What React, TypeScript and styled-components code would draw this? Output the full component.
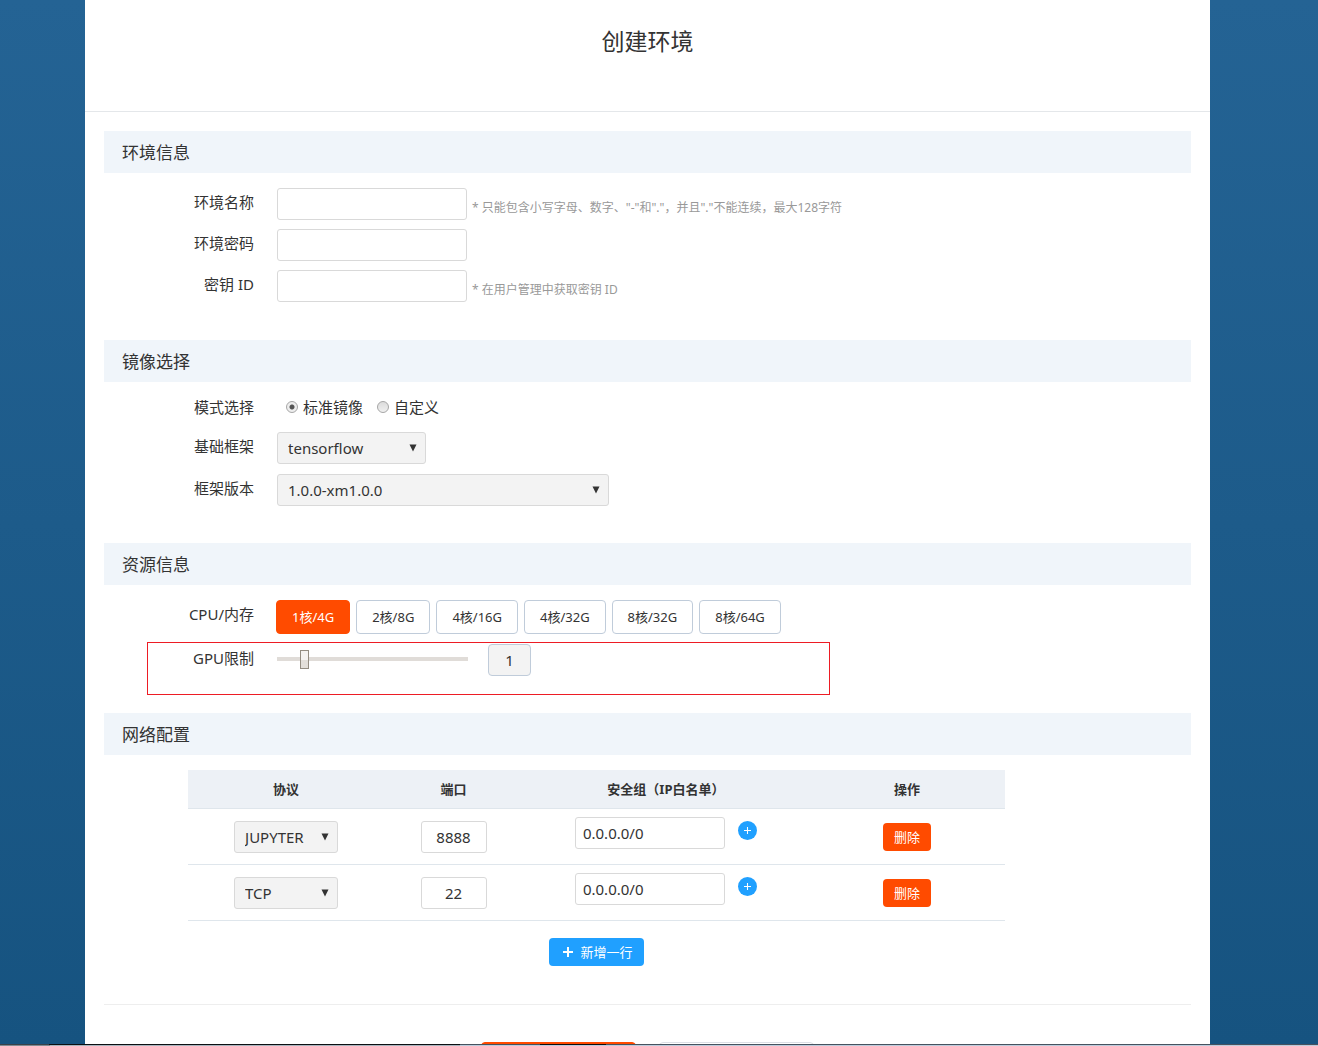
import React, { useId, useState } from "react";
import styled, { createGlobalStyle, css } from "styled-components";

const color = {
  text: "#333333",
  hint: "#999999",
  border: "#d9d9d9",
  steel: "#c0ccda",
  fill: "#f3f3f3",
  orange: "#ff4b00",
  blue: "#20a0ff",
  band: "#f0f5fa",
  line: "#dfe6ec",
};

const GlobalStyle = createGlobalStyle`
  *, *::before, *::after { box-sizing: border-box; }
  body {
    margin: 0;
    color: ${color.text};
    font: 15px/20px "Noto Sans", "Noto Sans CJK SC", sans-serif;
  }
  button, input, select { font: inherit; color: inherit; margin: 0; }
`;

const Screen = styled.div`
  display: flex;
  flex-direction: column;
  height: 100vh;
  overflow: hidden;
  background: linear-gradient(#246394, #165380);
`;

const Viewport = styled.div`
  flex: 1;
  min-height: 0;
  display: flex;
  overflow: hidden;
  padding: 0 108px 0 85px;
`;

const Panel = styled.main`
  flex: 1;
  min-width: 0;
  background: #ffffff;
`;

const Header = styled.header`
  height: 112px;
  padding-top: 25px;
  border-bottom: 1px solid #e4e7ea;
  text-align: center;
`;

const Title = styled.h1`
  margin: 0;
  font-size: 23px;
  line-height: 32px;
  font-weight: 400;
`;

const Form = styled.form`
  padding: 19px 19px 0;
`;

const SectionTitle = styled.h2`
  margin: 0;
  padding: 2px 18px 0;
  background: ${color.band};
  font-size: 17px;
  line-height: 40px;
  font-weight: 400;
`;

const Rows = styled.div<{ $tight?: boolean }>`
  display: flex;
  flex-direction: column;
  gap: ${(p) => (p.$tight ? 9 : 10)}px;
  padding: 15px 0 ${(p) => (p.$tight ? 38 : 37)}px;
`;

const Row = styled.div<{ $marked?: boolean }>`
  display: flex;
  align-items: flex-start;
  gap: 23px;
  ${(p) =>
    p.$marked &&
    css`
      position: relative;
      &::after {
        content: "";
        position: absolute;
        inset: -2px auto -19px 43px;
        width: 683px;
        border: 1px solid #ed1c24;
        pointer-events: none;
      }
    `}
`;

const labelStyle = css`
  flex: none;
  width: 150px;
  line-height: 28px;
  text-align: right;
`;
const Label = styled.label`
  ${labelStyle}
`;
const Caption = styled.span<{ $short?: boolean }>`
  ${labelStyle}
  ${(p) => p.$short && "line-height: 20px;"}
`;

const TextBox = styled.input<{ $width: number; $center?: boolean }>`
  width: ${(p) => p.$width}px;
  height: 32px;
  padding: 0 7px;
  border: 1px solid ${color.border};
  border-radius: 3px;
  background: #ffffff;
  text-align: ${(p) => (p.$center ? "center" : "left")};
`;

const Field = styled.div`
  display: flex;
  gap: 5px;
`;

const Hint = styled.span`
  padding-top: 10px;
  color: ${color.hint};
  font-size: 12px;
  line-height: 20px;
`;

const SelectBox = styled.span<{ $width: number }>`
  position: relative;
  display: inline-block;
  vertical-align: middle;
  width: ${(p) => p.$width}px;
  height: 32px;

  select {
    appearance: none;
    display: block;
    width: 100%;
    height: 100%;
    padding: 0 24px 0 10px;
    border: 1px solid ${color.border};
    border-radius: 3px;
    background: ${color.fill};
  }
  svg {
    position: absolute;
    top: 12px;
    right: 9px;
    pointer-events: none;
  }
`;

const Radios = styled.div`
  display: flex;
  gap: 14px;
  height: 25px;
  padding-left: 9px;
`;

const RadioLabel = styled.label`
  display: flex;
  gap: 5px;
`;

const Radio = styled.input`
  appearance: none;
  width: 12px;
  height: 12px;
  margin-top: 4px;
  border: 1px solid #a6a6a6;
  border-radius: 50%;
  background: linear-gradient(#dcdcdc, #f0f0f0);
  &:checked {
    background: radial-gradient(circle, #555555 0 2px, #eeeeee 3px);
  }
`;

const Sizes = styled.div`
  display: flex;
  gap: 6px;
  margin-left: -1px;
`;

const SizeButton = styled.button<{ $on: boolean }>`
  height: 34px;
  padding: 0 15px;
  border: 1px solid ${(p) => (p.$on ? color.orange : color.steel)};
  border-radius: 4px;
  background: ${(p) => (p.$on ? color.orange : "#ffffff")};
  color: ${(p) => (p.$on ? "#ffffff" : color.text)};
  font-size: 13px;
`;

const Slider = styled.input`
  appearance: none;
  width: 191px;
  height: 30px;
  background: transparent;
  &::-webkit-slider-runnable-track {
    height: 4px;
    background: #e0dcd8;
  }
  &::-webkit-slider-thumb {
    appearance: none;
    width: 9px;
    height: 19px;
    margin-top: -7px;
    border: 1px solid #948d82;
    background: linear-gradient(#f5f3f1 50%, #e3dfda 50%);
  }
`;

const SliderGroup = styled.div`
  display: flex;
  gap: 20px;
`;

const Count = styled.input`
  width: 43px;
  height: 32px;
  padding: 0;
  border: 1px solid ${color.steel};
  border-radius: 4px;
  background: ${color.fill};
  text-align: center;
`;

const Network = styled.div`
  display: flex;
  flex-direction: column;
  align-items: center;
  gap: 17px;
  max-width: 817px;
  margin: 15px 0 38px 84px;
`;

const Table = styled.table`
  width: 100%;
  border-collapse: separate;
  border-spacing: 0;
  table-layout: fixed;
  text-align: center;
`;

const Head = styled.th<{ $width?: string }>`
  width: ${(p) => p.$width ?? "auto"};
  height: 39px;
  padding: 0;
  border-bottom: 1px solid ${color.line};
  background: #edf1f6;
  font-size: 13px;
  font-weight: 700;
`;

const Cell = styled.td<{ $top?: boolean }>`
  height: 56px;
  padding: ${(p) => (p.$top ? "8px 0 0" : "0")};
  border-bottom: 1px solid ${color.line};
  vertical-align: ${(p) => (p.$top ? "top" : "middle")};
`;

const Group = styled.div`
  display: flex;
  justify-content: center;
  gap: 13px;
`;

const RoundButton = styled.button`
  display: grid;
  place-items: center;
  width: 19px;
  height: 19px;
  margin-top: 4px;
  padding: 0;
  border: 0;
  border-radius: 50%;
  background: ${color.blue};
`;

const SolidButton = styled.button<{ $tone: string; $wide?: boolean }>`
  display: inline-flex;
  align-items: center;
  gap: 7px;
  height: 28px;
  padding: 0 ${(p) => (p.$wide ? "11px 0 14px" : "11px")};
  border: 0;
  border-radius: 4px;
  background: ${(p) => p.$tone};
  color: #ffffff;
  font-size: 13px;
  vertical-align: middle;
`;

const Footer = styled.footer`
  display: flex;
  justify-content: center;
  gap: 23px;
  padding-top: 37px;
  border-top: 1px solid #eeeeee;
`;

const FooterButton = styled.button<{ $primary?: boolean }>`
  width: 155px;
  height: 40px;
  border: 1px solid ${(p) => (p.$primary ? color.orange : "#dcdfe6")};
  border-radius: 4px;
  background: ${(p) => (p.$primary ? color.orange : "#ffffff")};
`;

const Taskbar = styled.div`
  flex: none;
  height: 2px;
  border-top: 1px solid #101418;
  border-image: linear-gradient(
      90deg,
      #39424a 0 50px,
      #0c0f12 50px 460px,
      #46525f 460px 540px,
      #0c0f12 540px 606px,
      #46525f 606px
    )
    1;
  background: linear-gradient(90deg, #7f8b93 0 50px, #a9b4bd 50px 460px, #bccbdb 460px);
`;

function Select({ id, width, options, label }: { id?: string; width: number; options: string[]; label?: string }) {
  return (
    <SelectBox $width={width}>
      <select id={id} aria-label={label}>
        {options.map((o) => (
          <option key={o}>{o}</option>
        ))}
      </select>
      <svg width="8" height="8" viewBox="0 0 8 8" aria-hidden="true">
        <path d="M0.5 0.5h7L4 7.5z" fill="#333" />
      </svg>
    </SelectBox>
  );
}

function Plus({ size, stroke }: { size: number; stroke: number }) {
  return (
    <svg width={size} height={size} viewBox="0 0 10 10" aria-hidden="true">
      <path d="M5 0v10M0 5h10" stroke="#fff" strokeWidth={stroke} />
    </svg>
  );
}

function TextRow({ label, hint, type = "text" }: { label: string; hint?: string; type?: string }) {
  const id = useId();
  return (
    <Row>
      <Label htmlFor={id}>{label}</Label>
      <Field>
        <TextBox id={id} type={type} $width={190} />
        {hint && <Hint>{hint}</Hint>}
      </Field>
    </Row>
  );
}

function SelectRow({ label, width, options }: { label: string; width: number; options: string[] }) {
  const id = useId();
  return (
    <Row>
      <Label htmlFor={id}>{label}</Label>
      <Select id={id} width={width} options={options} />
    </Row>
  );
}

const sizes = ["1核/4G", "2核/8G", "4核/16G", "4核/32G", "8核/32G", "8核/64G"];
const rules = [
  { protocol: "JUPYTER", port: "8888", source: "0.0.0.0/0" },
  { protocol: "TCP", port: "22", source: "0.0.0.0/0" },
];

export default function App() {
  const [size, setSize] = useState(sizes[0]);
  const [gpu, setGpu] = useState(1);

  return (
    <Screen>
      <GlobalStyle />
      <Viewport>
        <Panel>
          <Header>
            <Title>创建环境</Title>
          </Header>
          <Form onSubmit={(e) => e.preventDefault()}>
            <SectionTitle>环境信息</SectionTitle>
            <Rows $tight>
              <TextRow label="环境名称" hint={'* 只能包含小写字母、数字、"-"和"."，并且"."不能连续，最大128字符'} />
              <TextRow label="环境密码" type="password" />
              <TextRow label="密钥 ID" hint="* 在用户管理中获取密钥 ID" />
            </Rows>

            <SectionTitle>镜像选择</SectionTitle>
            <Rows>
              <Row role="radiogroup" aria-labelledby="mode">
                <Caption id="mode" $short>模式选择</Caption>
                <Radios>
                  <RadioLabel>
                    <Radio type="radio" name="mode" defaultChecked />
                    标准镜像
                  </RadioLabel>
                  <RadioLabel>
                    <Radio type="radio" name="mode" />
                    自定义
                  </RadioLabel>
                </Radios>
              </Row>
              <SelectRow label="基础框架" width={149} options={["tensorflow"]} />
              <SelectRow label="框架版本" width={332} options={["1.0.0-xm1.0.0"]} />
            </Rows>

            <SectionTitle>资源信息</SectionTitle>
            <Rows>
              <Row>
                <Caption>CPU/内存</Caption>
                <Sizes>
                  {sizes.map((s) => (
                    <SizeButton key={s} type="button" $on={s === size} onClick={() => setSize(s)}>
                      {s}
                    </SizeButton>
                  ))}
                </Sizes>
              </Row>
              <Row $marked>
                <Label htmlFor="gpu">GPU限制</Label>
                <SliderGroup>
                  <Slider
                    id="gpu"
                    type="range"
                    min={0}
                    max={8}
                    value={gpu}
                    onChange={(e) => setGpu(Number(e.target.value))}
                  />
                  <Count aria-label="GPU" readOnly value={gpu} />
                </SliderGroup>
              </Row>
            </Rows>

            <SectionTitle>网络配置</SectionTitle>
            <Network>
              <Table>
                <thead>
                  <tr>
                    <Head $width="24%">协议</Head>
                    <Head $width="17%">端口</Head>
                    <Head>安全组（IP白名单）</Head>
                    <Head $width="24%">操作</Head>
                  </tr>
                </thead>
                <tbody>
                  {rules.map((r) => (
                    <tr key={r.protocol}>
                      <Cell>
                        <Select label="协议" width={104} options={[r.protocol]} />
                      </Cell>
                      <Cell>
                        <TextBox aria-label="端口" $width={66} $center defaultValue={r.port} />
                      </Cell>
                      <Cell $top>
                        <Group>
                          <TextBox aria-label="安全组" $width={150} defaultValue={r.source} />
                          <RoundButton type="button" aria-label="添加">
                            <Plus size={7} stroke={1.5} />
                          </RoundButton>
                        </Group>
                      </Cell>
                      <Cell>
                        <SolidButton type="button" $tone={color.orange}>删除</SolidButton>
                      </Cell>
                    </tr>
                  ))}
                </tbody>
              </Table>
              <SolidButton type="button" $tone={color.blue} $wide>
                <Plus size={10} stroke={2} />
                新增一行
              </SolidButton>
            </Network>
            <Footer>
              <FooterButton type="submit" $primary aria-label="确定" />
              <FooterButton type="button" aria-label="取消" />
            </Footer>
          </Form>
        </Panel>
      </Viewport>
      <Taskbar />
    </Screen>
  );
}
